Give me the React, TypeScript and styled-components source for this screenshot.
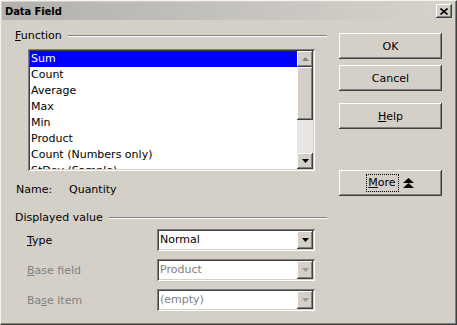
import React from "react";
import styled, { createGlobalStyle, css } from "styled-components";

const GlobalStyle = createGlobalStyle`
  html, body {
    margin: 0;
    padding: 0;
    background: #d4d0c8;
  }
  body {
    font-family: "DejaVu Sans", Verdana, sans-serif;
    font-size: 11px;
    color: #000;
  }
`;

const raised = css`
  box-shadow: inset -1px -1px #404040, inset 1px 1px #ffffff, inset -2px -2px #808080,
    inset 2px 2px #d4d0c8;
`;

const sunken = css`
  box-shadow: inset 1px 1px #808080, inset -1px -1px #ffffff, inset 2px 2px #404040,
    inset -2px -2px #d4d0c8;
`;

// only the rows that show in the list window
const functions = [
  "Sum",
  "Count",
  "Average",
  "Max",
  "Min",
  "Product",
  "Count (Numbers only)",
  "StDev (Sample)",
];

const TriangleUp = ({ color = "#000" }: { color?: string }) => (
  <svg width="7" height="4" viewBox="0 0 7 4">
    <polygon points="3.5,0 7,4 0,4" fill={color} />
  </svg>
);

const TriangleDown = ({ color = "#000" }: { color?: string }) => (
  <svg width="7" height="4" viewBox="0 0 7 4">
    <polygon points="0,0 7,0 3.5,4" fill={color} />
  </svg>
);

const DoubleUp = () => (
  <svg width="11" height="10" viewBox="0 0 11 10">
    <polygon points="5.5,0 11,5 0,5" fill="#000" />
    <polygon points="5.5,5 11,10 0,10" fill="#000" />
  </svg>
);

const CloseIcon = () => (
  <svg width="8" height="7" viewBox="0 0 8 7">
    <path d="M0.5 0.5 L7.5 6.5 M7.5 0.5 L0.5 6.5" stroke="#000" strokeWidth="1.6" />
  </svg>
);

const Combo = ({ value, disabled }: { value: string; disabled?: boolean }) => (
  <ComboBox>
    <ComboValue $disabled={disabled}>{value}</ComboValue>
    <ComboButton>
      <TriangleDown color={disabled ? "#9a9894" : "#000"} />
    </ComboButton>
  </ComboBox>
);

const App = () => {
  return (
    <>
      <GlobalStyle />
      <Window>
        <TitleBar>
          <Title>Data Field</Title>
          <CloseButton>
            <CloseIcon />
          </CloseButton>
        </TitleBar>
        <Body>
          <LeftColumn>
            <GroupHeader>
              <span>
                <u>F</u>unction
              </span>
              <GroupLine />
            </GroupHeader>
            <ListBox>
              <ListItems>
                {functions.map((f, i) => (
                  <ListItem key={f} $selected={i === 0}>
                    {f}
                  </ListItem>
                ))}
              </ListItems>
              <ScrollBar>
                <ScrollArrow>
                  <TriangleUp color="#808080" />
                </ScrollArrow>
                <ScrollThumb />
                <ScrollTrack />
                <ScrollArrow>
                  <TriangleDown />
                </ScrollArrow>
              </ScrollBar>
            </ListBox>
            <NameRow>
              <NameLabel>Name:</NameLabel>
              <span>Quantity</span>
            </NameRow>
            <GroupHeader $top={14}>
              <span>Displayed value</span>
              <GroupLine />
            </GroupHeader>
            <Fields>
              <FieldRow>
                <FieldLabel>
                  <u>T</u>ype
                </FieldLabel>
                <Combo value="Normal" />
              </FieldRow>
              <FieldRow>
                <FieldLabel $disabled>
                  <u>B</u>ase field
                </FieldLabel>
                <Combo value="Product" disabled />
              </FieldRow>
              <FieldRow>
                <FieldLabel $disabled>
                  Ba<u>s</u>e item
                </FieldLabel>
                <Combo value="(empty)" disabled />
              </FieldRow>
            </Fields>
          </LeftColumn>
          <ButtonColumn>
            <Button>
              <span>OK</span>
            </Button>
            <Button $top={6}>
              <span>Cancel</span>
            </Button>
            <Button $top={12}>
              <span>
                <u>H</u>elp
              </span>
            </Button>
            <Button $top={41}>
              <FocusRing>
                <u>M</u>ore
              </FocusRing>
              <DoubleUp />
            </Button>
          </ButtonColumn>
        </Body>
      </Window>
    </>
  );
};

const Window = styled.div`
  width: 457px;
  height: 325px;
  box-sizing: border-box;
  background: #d4d0c8;
  border: 1px solid;
  border-color: #f4f3f0 #404040 #404040 #f4f3f0;
  box-shadow: inset -1px -1px #808080;
  padding: 1px 2px 2px 1px;
  display: flex;
  flex-direction: column;
`;

const TitleBar = styled.div`
  height: 18px;
  display: flex;
  align-items: center;
  justify-content: space-between;
  padding: 0 2px 0 3px;
  background: linear-gradient(to right, #b2b1ae, #d6d3cc);
`;

const Title = styled.span`
  font-weight: bold;
  font-size: 10px;
  letter-spacing: -0.1px;
`;

const CloseButton = styled.div`
  width: 16px;
  height: 14px;
  display: flex;
  align-items: center;
  justify-content: center;
  background: #d4d0c8;
  ${raised};
`;

const Body = styled.div`
  flex: 1;
  display: flex;
  gap: 12px;
  padding: 8px 0 0 13px;
`;

const LeftColumn = styled.div`
  width: 312px;
  display: flex;
  flex-direction: column;
`;

const GroupHeader = styled.div<{ $top?: number }>`
  height: 14px;
  display: flex;
  align-items: center;
  gap: 6px;
  margin-top: ${(p) => p.$top ?? 0}px;
  white-space: nowrap;
`;

const GroupLine = styled.div`
  flex: 1;
  height: 1px;
  background: #808080;
  border-bottom: 1px solid #ffffff;
  margin-top: 1px;
`;

const ListBox = styled.div`
  width: 287px;
  height: 122px;
  box-sizing: border-box;
  margin: 7px 0 0 13px;
  padding: 2px;
  display: flex;
  background: #fff;
  ${sunken};
`;

const ListItems = styled.div`
  flex: 1;
  overflow: hidden;
  background: #fff;
`;

const ListItem = styled.div<{ $selected?: boolean }>`
  height: 16px;
  line-height: 16px;
  padding-left: 1px;
  white-space: nowrap;
  background: ${(p) => (p.$selected ? "#0000ff" : "transparent")};
  color: ${(p) => (p.$selected ? "#fff" : "#000")};
`;

const ScrollBar = styled.div`
  width: 16px;
  display: flex;
  flex-direction: column;
`;

const ScrollArrow = styled.div`
  height: 16px;
  display: flex;
  align-items: center;
  justify-content: center;
  background: #d4d0c8;
  ${raised};
`;

const ScrollThumb = styled.div`
  height: 53px;
  background: #d4d0c8;
  ${raised};
`;

const ScrollTrack = styled.div`
  flex: 1;
  background: #e8e6e2;
`;

const NameRow = styled.div`
  height: 14px;
  display: flex;
  align-items: center;
  margin-top: 11px;
  padding-left: 1px;
`;

const NameLabel = styled.span`
  width: 53px;
`;

const Fields = styled.div`
  display: flex;
  flex-direction: column;
  gap: 8px;
  margin-top: 5px;
`;

const FieldRow = styled.div`
  height: 22px;
  display: flex;
  align-items: center;
  padding-left: 12px;
`;

const FieldLabel = styled.span<{ $disabled?: boolean }>`
  width: 130px;
  color: ${(p) => (p.$disabled ? "#808080" : "#000")};
`;

const ComboBox = styled.div`
  width: 158px;
  height: 22px;
  box-sizing: border-box;
  padding: 2px;
  display: flex;
  background: #fff;
  ${sunken};
`;

const ComboValue = styled.div<{ $disabled?: boolean }>`
  flex: 1;
  padding-left: 1px;
  line-height: 18px;
  color: ${(p) => (p.$disabled ? "#808080" : "#000")};
`;

const ComboButton = styled.div`
  width: 16px;
  display: flex;
  align-items: center;
  justify-content: center;
  background: #d4d0c8;
  ${raised};
`;

const ButtonColumn = styled.div`
  width: 103px;
  display: flex;
  flex-direction: column;
  padding-top: 5px;
`;

const Button = styled.div<{ $top?: number }>`
  height: 26px;
  margin-top: ${(p) => p.$top ?? 0}px;
  display: flex;
  align-items: center;
  justify-content: center;
  gap: 5px;
  background: #d4d0c8;
  ${raised};
`;

const FocusRing = styled.span`
  padding: 1px 2px 2px 1px;
  outline: 1px dotted #000;
`;

export default App;
